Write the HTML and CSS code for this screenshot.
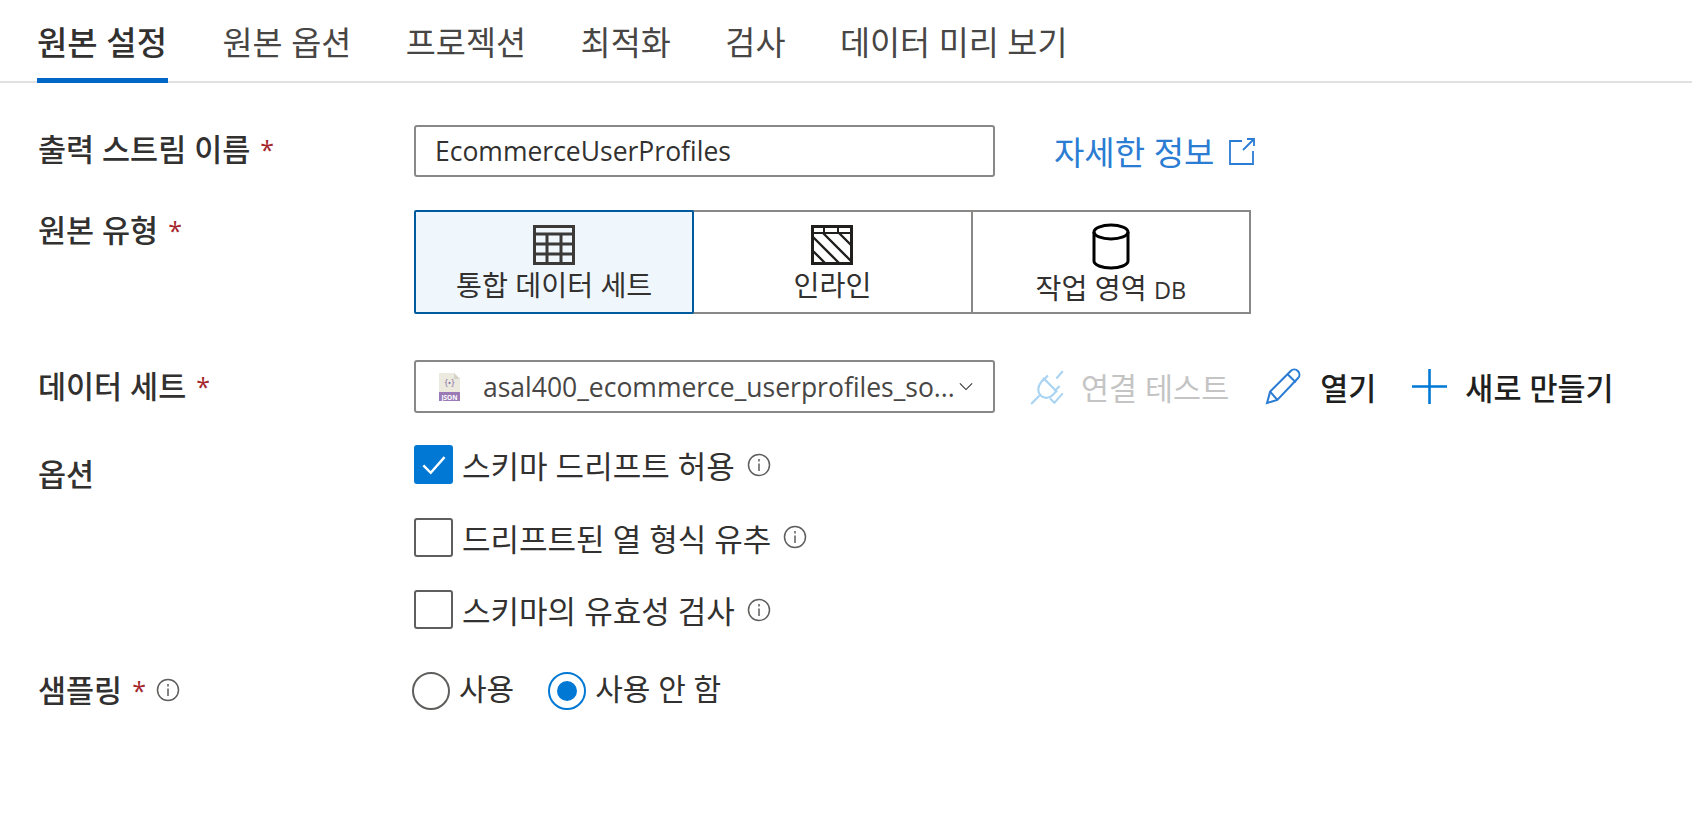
FILE: index.html
```html
<!DOCTYPE html>
<html lang="ko">
<head>
    <meta charset="UTF-8">
    <title>원본 설정</title>
    <link rel="stylesheet" href="styles.css">
</head>
<body>
    <nav class="tabs">
        <a class="tab active">원본 설정</a>
        <a class="tab">원본 옵션</a>
        <a class="tab">프로젝션</a>
        <a class="tab">최적화</a>
        <a class="tab">검사</a>
        <a class="tab">데이터 미리 보기</a>
    </nav>

    <form class="form">
        <div class="row row-name">
            <div class="label">출력 스트림 이름 <span class="req">*</span></div>
            <div class="field">
                <div class="input">EcommerceUserProfiles</div>
                <a class="learn">자세한 정보
                    <svg class="ext-icon" viewBox="0 0 28 28" fill="none" stroke="#2b7cd3" stroke-width="1.800">
                        <path d="M14 4H2v23h23V14"/>
                        <path d="M19 2h7v7M26 2L15 13"/>
                    </svg>
                </a>
            </div>
        </div>

        <div class="row row-type">
            <div class="label">원본 유형 <span class="req">*</span></div>
            <div class="tiles">
                <div class="tile selected">
                    <svg class="tile-icon" viewBox="0 0 44 44" fill="none" stroke="#3b3a39" stroke-width="3">
                        <rect x="2.500" y="3.500" width="39" height="37"/>
                        <path d="M2 11h40M2 21h40M2 31h40M15 11v30M29 11v30"/>
                    </svg>
                    <span>통합 데이터 세트</span>
                </div>
                <div class="tile">
                    <svg class="tile-icon" viewBox="0 0 44 44" fill="none" stroke="#201f1e" stroke-width="3">
                        <rect x="2.500" y="3.500" width="39" height="37"/>
                        <path d="M2 10h40" stroke-width="2"/>
                        <path d="M14 4v6M28 4v6" stroke-width="2"/>
                        <path d="M3 14l26 26M13 10l28 28M29 10l12 12M3 28l12 12" stroke-width="2.400"/>
                    </svg>
                    <span>인라인</span>
                </div>
                <div class="tile tile-db">
                    <svg class="tile-icon" viewBox="0 0 38 47" fill="none" stroke="#000" stroke-width="3">
                        <ellipse cx="19" cy="9" rx="17" ry="7"/>
                        <path d="M2 9v29c0 4 8 7 17 7s17-3 17-7V9"/>
                    </svg>
                    <span>작업 영역 <small class="db">DB</small></span>
                </div>
            </div>
        </div>

        <div class="row row-dataset">
            <div class="label">데이터 세트 <span class="req">*</span></div>
            <div class="field">
                <div class="input select">
                    <svg class="json-icon" viewBox="0 0 24 28">
                        <path d="M2 0h15l6 6v22H2z" fill="#ece9df"/>
                        <path d="M17 0l6 6h-6z" fill="#d5d2c8"/>
                        <rect x="2" y="19" width="21" height="9" fill="#9a7bb5"/>
                        <text x="12.500" y="26.500" class="json-word">JSON</text>
                        <text x="12.500" y="13" class="json-brace">{•}</text>
                    </svg>
                    <span class="select-text">asal400_ecommerce_userprofiles_so...</span>
                    <svg class="chev" viewBox="0 0 16 10" fill="none" stroke="#323130" stroke-width="1.200">
                        <path d="M1 1.500l7 7 7-7"/>
                    </svg>
                </div>
                <div class="actions">
                    <a class="action disabled">
                        <svg class="plug" viewBox="0 0 36 36" fill="none" stroke="#a9d3f2" stroke-width="2">
                            <path d="M14 10l12 12-4 4c-3 3-8 3-11 0s-3-8 0-12z"/>
                            <path d="M18 7l-5 5M29 17l-5 5M26 10l6-7M10 26l-8 8"/>
                            <path d="M20 29l4 4 8-9"/>
                        </svg>
                        연결 테스트
                    </a>
                    <a class="action">
                        <svg class="pencil" viewBox="0 0 36 36" fill="none" stroke="#2b7cd3" stroke-width="2">
                            <path d="M2 34l3-11L25 3c2-2 5-2 7 0s2 5 0 7L12 31z"/>
                            <path d="M5 23l7 8M22 6l8 8"/>
                        </svg>
                        열기
                    </a>
                    <a class="action">
                        <svg class="plus" viewBox="0 0 34 34" fill="none" stroke="#0078d4" stroke-width="2.500">
                            <path d="M17 0v34M0 17h34"/>
                        </svg>
                        새로 만들기
                    </a>
                </div>
            </div>
        </div>

        <div class="row row-options">
            <div class="label">옵션</div>
            <div class="checks">
                <label class="check">
                    <span class="box on">
                        <svg viewBox="0 0 38 38" fill="none" stroke="#fff" stroke-width="2.600">
                            <path d="M8 20l8 8 15-17"/>
                        </svg>
                    </span>
                    스키마 드리프트 허용
                    <svg class="info" viewBox="0 0 24 24"><circle cx="12" cy="12" r="10.500"/><path d="M12 10.500V18M12 6v2.500"/></svg>
                </label>
                <label class="check">
                    <span class="box"></span>
                    드리프트된 열 형식 유추
                    <svg class="info" viewBox="0 0 24 24"><circle cx="12" cy="12" r="10.500"/><path d="M12 10.500V18M12 6v2.500"/></svg>
                </label>
                <label class="check">
                    <span class="box"></span>
                    스키마의 유효성 검사
                    <svg class="info" viewBox="0 0 24 24"><circle cx="12" cy="12" r="10.500"/><path d="M12 10.500V18M12 6v2.500"/></svg>
                </label>
            </div>
        </div>

        <div class="row row-sampling">
            <div class="label">샘플링 <span class="req">*</span>
                <svg class="info" viewBox="0 0 24 24"><circle cx="12" cy="12" r="10.500"/><path d="M12 10.500V18M12 6v2.500"/></svg>
            </div>
            <div class="radios">
                <label class="radio"><span class="dot"></span><span class="radio-text">사용</span></label>
                <label class="radio"><span class="dot on"></span><span class="radio-text">사용 안 함</span></label>
            </div>
        </div>
    </form>
</body>
</html>
```

FILE: styles.css
```css
* {
    box-sizing: border-box;
}
body {
    background: #fff;
    color: #323130;
    font-family: "Open Sans", "Noto Sans CJK KR", sans-serif;
    font-size: 26px;
    margin: 0;
    padding: 0;
    height: 814px;
    overflow: hidden;
}
.tabs {
    display: flex;
    height: 83px;
    padding-left: 37px;
    gap: 54.500px;
    border-bottom: 2px solid #e1e1e1;
}
.tab {
    height: 83px;
    padding-top: 22px;
    font-size: 32.700px;
    line-height: 42px;
    color: #484644;
    white-space: nowrap;
}
.tab.active {
    font-weight: 500;
    font-size: 33px;
    padding-right: 1px;
    color: #323130;
    border-bottom: 5px solid #0067c7;
}
.form {
    padding-left: 38px;
}
.row {
    display: grid;
    grid-template-columns: 376px 1fr;
}
.row-name {
    margin-top: 42px;
    height: 51px;
}
.row-type {
    margin-top: 34px;
    height: 104px;
}
.row-dataset {
    margin-top: 46px;
    height: 53px;
}
.row-options {
    margin-top: 32px;
    height: 184px;
}
.row-sampling {
    margin-top: 43px;
}
.label {
    font-size: 30.500px;
    font-weight: 500;
    line-height: 50px;
    display: flex;
    align-items: center;
    gap: 10px;
    height: 50px;
    white-space: nowrap;
}
.row-name .label {
    margin-top: -1px;
}
.row-type .label {
    margin-top: -5px;
}
.row-dataset .label {
    margin-top: 1px;
}
.row-options .label {
    margin-top: 4px;
}
.row-sampling .label {
    margin-top: -7px;
}
.req {
    color: #a4262c;
    font-size: 25px;
}
.field {
    display: flex;
    align-items: center;
}
.input {
    width: 581px;
    height: 100%;
    flex: none;
    border: 2px solid #8a8886;
    border-radius: 3px;
    padding-left: 19px;
    font-size: 26.500px;
    line-height: 48px;
    color: #323130;
}
.learn {
    margin-left: 59px;
    color: #2b7cd3;
    font-size: 33px;
    display: flex;
    align-items: center;
    gap: 14px;
    white-space: nowrap;
}
.ext-icon {
    width: 28px;
    height: 28px;
}
.tiles {
    display: flex;
    width: 837px;
    height: 104px;
}
.tile {
    flex: 1;
    border: 2px solid #8a8886;
    margin-left: -2px;
    display: flex;
    flex-direction: column;
    align-items: center;
    padding-top: 11px;
    font-size: 28.200px;
    line-height: 37px;
    white-space: nowrap;
}
.tile:first-child {
    margin-left: 0;
}
.tile.selected {
    background: #eff6fc;
    border-color: #005a9e;
    border-radius: 2px;
    position: relative;
}
.tile-icon {
    width: 44px;
    height: 44px;
    flex: none;
}
.tile-db .tile-icon {
    width: 38px;
    height: 47px;
}
.db {
    font-size: 23.500px;
}
.select {
    display: flex;
    align-items: center;
    padding-left: 21px;
    padding-right: 20px;
    color: #484644;
}
.json-icon {
    width: 24px;
    height: 28px;
    flex: none;
}
.json-word {
    fill: #fff;
    font-size: 6.500px;
    font-weight: 700;
    text-anchor: middle;
}
.json-brace {
    fill: #8a6fa6;
    font-size: 9px;
    text-anchor: middle;
}
.select-text {
    margin-left: 22px;
    white-space: nowrap;
    flex: 1;
}
.chev {
    width: 14px;
    height: 9px;
    flex: none;
}
.actions {
    display: flex;
    align-items: center;
    margin-left: 34px;
    gap: 36px;
    white-space: nowrap;
}
.action {
    display: flex;
    align-items: center;
    gap: 18px;
    font-size: 30.500px;
    font-weight: 500;
    color: #201f1e;
}
.action.disabled {
    color: #c4c4c4;
    font-weight: 400;
    gap: 14px;
}
.plug {
    width: 38px;
    height: 38px;
}
.pencil {
    width: 37px;
    height: 37px;
}
.plus {
    width: 35px;
    height: 35px;
}
.checks {
    display: flex;
    flex-direction: column;
    gap: 33.500px;
}
.check {
    display: flex;
    align-items: center;
    height: 39px;
    gap: 9px;
    white-space: nowrap;
    font-size: 31px;
}
.box {
    width: 39px;
    height: 39px;
    flex: none;
    border: 2px solid #605e5c;
    border-radius: 3px;
}
.box.on {
    background: #0078d4;
    border-color: #0078d4;
}
.box svg {
    display: block;
    width: 100%;
    height: 100%;
}
.info {
    width: 24px;
    height: 24px;
    margin-left: 3px;
    fill: none;
    stroke: #605e5c;
    stroke-width: 1.500;
    flex: none;
}
.row-sampling .info {
    margin-left: 0;
}
.radios {
    display: flex;
    align-items: center;
    gap: 34px;
    margin-left: -2px;
    height: 38px;
}
.radio {
    display: flex;
    align-items: center;
    gap: 9px;
    font-size: 30px;
    white-space: nowrap;
}
.radio-text {
    margin-top: -9px;
}
.dot {
    width: 38px;
    height: 38px;
    border: 2px solid #605e5c;
    border-radius: 50%;
    flex: none;
    position: relative;
}
.dot.on {
    border-color: #0078d4;
}
.dot.on::after {
    content: "";
    position: absolute;
    left: 7px;
    top: 7px;
    width: 20px;
    height: 20px;
    border-radius: 50%;
    background: #0078d4;
}
```
